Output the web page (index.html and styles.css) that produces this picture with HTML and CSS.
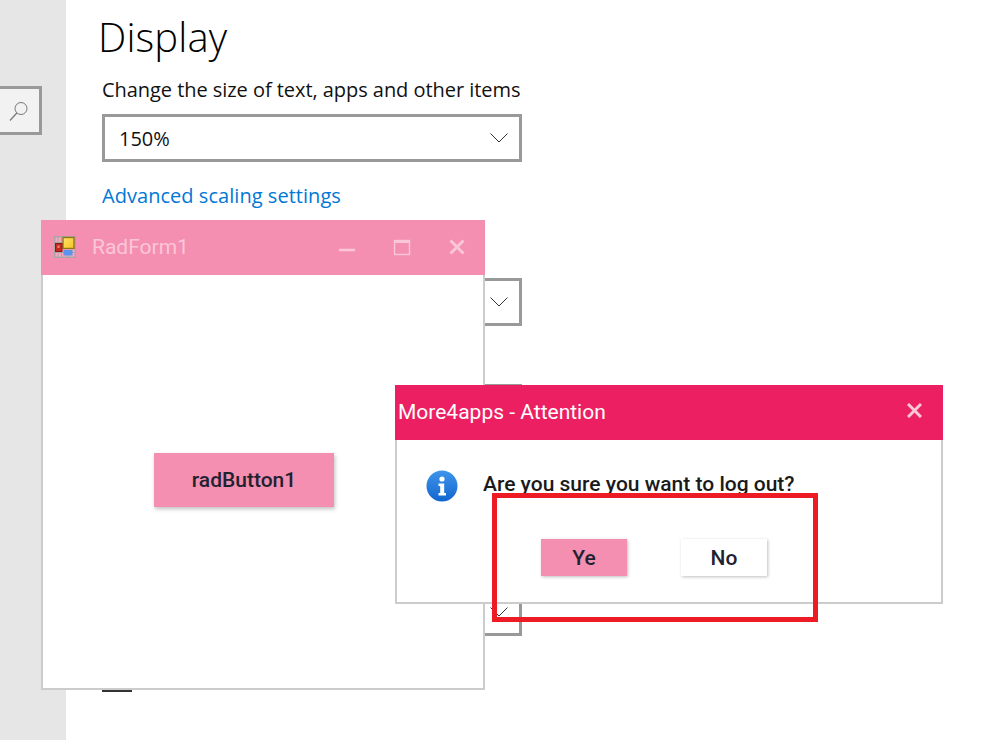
FILE: index.html
```html
<!DOCTYPE html>
<html>
<head>
<meta charset="utf-8"/>
<title>Display</title>
<link rel="stylesheet" href="styles.css">
</head>
<body>

<div class="settings">
  <div class="sidebar">
    <div class="search">
      <svg width="22" height="22" viewBox="0 0 22 22">
        <circle cx="13" cy="8.5" r="6" fill="none" stroke="#777" stroke-width="1"/>
        <path d="M8.8 13 L2 20.5" stroke="#777" stroke-width="1.2" fill="none"/>
      </svg>
    </div>
  </div>
  <div class="content">
    <h1>Display</h1>
    <div class="label">Change the size of text, apps and other items</div>
    <div class="select">
      <span>150%</span>
      <svg class="chevron" width="18" height="10" viewBox="0 0 18 10"><path d="M0.5 0.5 L9 9 L17.5 0.5" fill="none" stroke="#333" stroke-width="1"/></svg>
    </div>
    <a class="link" href="#">Advanced scaling settings</a>
    <div class="select select-2">
      <svg class="chevron" width="18" height="10" viewBox="0 0 18 10"><path d="M0.5 0.5 L9 9 L17.5 0.5" fill="none" stroke="#333" stroke-width="1"/></svg>
    </div>
    <div class="select select-3"></div>
    <div class="select select-4">
      <svg class="chevron" width="18" height="10" viewBox="0 0 18 10"><path d="M0.5 0.5 L9 9 L17.5 0.5" fill="none" stroke="#333" stroke-width="1"/></svg>
    </div>
    <div class="toggle"></div>
  </div>
</div>

<!-- RadForm1 window -->
<div class="window form-window">
  <div class="titlebar form-title">
    <svg class="app-icon" width="22" height="22" viewBox="0 0 22 22">
      <defs>
        <linearGradient id="iconGold" x1="0" y1="0" x2="1" y2="1">
          <stop offset="0" stop-color="#ffe26a"/>
          <stop offset="1" stop-color="#f5c21f"/>
        </linearGradient>
      </defs>
      <rect x="0.7" y="0.7" width="20.6" height="20.6" fill="#f4a9bf" stroke="#a9a5a5" stroke-width="1.4"/>
      <path d="M0 6.5 H8 M0 16.5 H22 M7.5 0 V22 M4 0 V6 M4 17 V22 M14.5 17 V22" stroke="#a9a5a5" fill="none"/>
      <rect x="9" y="1.5" width="11" height="11" fill="url(#iconGold)" stroke="#93761a" stroke-width="1.4"/>
      <rect x="1.5" y="7.5" width="6.5" height="8" fill="#c8281e" stroke="#8a1a14"/>
      <rect x="3.5" y="9.5" width="2" height="2.5" fill="#e88a7a"/>
      <rect x="9.5" y="14" width="9" height="5.5" fill="#5c93ee"/>
    </svg>
    <span class="form-name">RadForm1</span>
    <div class="controls">
      <svg width="18" height="18" viewBox="0 0 18 18"><path d="M1 12 H17" stroke="#fbc6d8" stroke-width="2.6"/></svg>
      <svg width="18" height="18" viewBox="0 0 18 18"><rect x="1.5" y="2.5" width="15" height="14" fill="none" stroke="#fbc6d8" stroke-width="1.4"/><path d="M1 3.5 H17" stroke="#fbc6d8" stroke-width="3"/></svg>
      <svg width="18" height="18" viewBox="0 0 18 18"><path d="M2.5 2.5 L15.5 15.5 M15.5 2.5 L2.5 15.5" stroke="#fbc6d8" stroke-width="3"/></svg>
    </div>
  </div>
  <div class="form-body">
    <div class="btn btn-large">radButton1</div>
  </div>
</div>

<!-- message box -->
<div class="window dialog-window">
  <div class="titlebar dialog-title">
    <span class="dialog-name">More4apps - Attention</span>
    <svg class="dialog-close" width="15" height="15" viewBox="0 0 15 15"><path d="M1 1 L14 14 M14 1 L1 14" stroke="#fbc6d8" stroke-width="3"/></svg>
  </div>
  <div class="dialog-body">
    <div class="dialog-msg">
      <svg class="info-icon" width="32" height="32" viewBox="0 0 32 32">
        <defs>
          <linearGradient id="infoBlue" x1="0" y1="0" x2="0" y2="1">
            <stop offset="0" stop-color="#3f95ea"/>
            <stop offset="1" stop-color="#1166cf"/>
          </linearGradient>
        </defs>
        <circle cx="16" cy="16" r="15.5" fill="url(#infoBlue)"/>
        <circle cx="16" cy="9" r="2.6" fill="#fff"/>
        <path d="M12.5 13.5 H18.2 V23 H20 V25.5 H12.5 V23 H14.2 V16 H12.5 Z" fill="#fff"/>
      </svg>
      <span class="msg-text">Are you sure you want to log out?</span>
    </div>
    <div class="dialog-buttons">
      <div class="btn btn-small btn-pink">Ye</div>
      <div class="btn btn-small btn-white">No</div>
    </div>
  </div>
</div>

<!-- red marker drawn on the screenshot -->
<div class="marker"></div>

</body>
</html>
```

FILE: styles.css
```css
html, body {
  margin: 0;
  padding: 0;
  height: 100%;
  background: #fff;
  overflow: hidden;
}

body {
  position: relative;
  font-family: 'Roboto', 'Liberation Sans', sans-serif;
  color: #1a1a1a;
}

.settings {
  display: flex;
  height: 740px;
}

.sidebar {
  width: 66px;
  flex-shrink: 0;
  background: #e6e6e6;
  padding-top: 86px;
  box-sizing: border-box;
}

.search {
  width: 42px;
  height: 49px;
  box-sizing: border-box;
  border: 3px solid #999;
  border-left: none;
  background: #f2f2f2;
  display: flex;
  align-items: center;
  justify-content: flex-end;
  padding-right: 9px;
}

.content {
  padding-left: 36px;
  font-family: 'Open Sans', 'Liberation Sans', sans-serif;
}

h1 {
  margin: 0 0 0 -4px;
  height: 73px;
  font-size: 40px;
  font-weight: 300;
  line-height: 74px;
  letter-spacing: 0.15px;
  color: #000;
}

.label {
  font-size: 20px;
  line-height: 34px;
  height: 41px;
  letter-spacing: -0.05px;
  color: #111;
}

.select {
  width: 420px;
  height: 48px;
  box-sizing: border-box;
  border: 3px solid #999;
  display: flex;
  align-items: center;
  justify-content: space-between;
  padding: 0 11px 0 14px;
  font-size: 20px;
  color: #111;
  background: #fff;
}

.select .chevron {
  margin-left: auto;
}

.link {
  display: block;
  margin-top: 18px;
  font-size: 20px;
  line-height: 32px;
  letter-spacing: 0.04px;
  color: #0078d7;
  text-decoration: none;
}

.select-2 {
  margin-top: 66px;
}

.select-3 {
  margin-top: 58px;
}

.select-4 {
  margin-top: 156px;
}

.toggle {
  width: 30px;
  height: 4px;
  margin-top: 52px;
  background: #333;
}

.window {
  position: absolute;
  box-sizing: border-box;
  background: #fff;
  display: flex;
  flex-direction: column;
}

.form-window {
  left: 41px;
  top: 220px;
  width: 444px;
  height: 470px;
}

.dialog-window {
  left: 395px;
  top: 385px;
  width: 548px;
  height: 219px;
}

.titlebar {
  height: 55px;
  box-sizing: border-box;
  padding-bottom: 2px;
  flex-shrink: 0;
  display: flex;
  align-items: center;
}

.form-title {
  background: #f48fb1;
  padding: 0 19px 2px 13px;
}

.app-icon {
  margin-right: 16px;
}

.form-name {
  font-size: 21px;
  color: #fbc6d8;
}

.controls {
  margin-left: auto;
  display: flex;
  gap: 37px;
}

.form-body {
  flex: 1;
  border: 2px solid #ccc;
  border-top: none;
  display: flex;
  align-items: flex-start;
  padding: 178px 0 0 111px;
}

.btn {
  display: flex;
  align-items: center;
  justify-content: center;
  font-weight: 500;
  color: #1f2230;
}

.btn-large {
  width: 180px;
  height: 54px;
  background: #f48fb1;
  font-size: 21px;
  box-shadow: 1px 2px 4px rgba(0, 0, 0, 0.25);
}

.dialog-title {
  background: #ec1f63;
  padding: 0 21px 2px 3px;
  justify-content: space-between;
}

.dialog-close {
  margin-bottom: 2px;
}

.dialog-name {
  font-size: 21px;
  color: #fff;
}

.dialog-body {
  flex: 1;
  border: 2px solid #ccc;
  border-top: none;
  position: relative;
}

.dialog-msg {
  display: flex;
  align-items: center;
  padding: 30px 0 0 29px;
  font-size: 21px;
  font-weight: 500;
  color: #1a1a1a;
}

.msg-text {
  margin-bottom: 4px;
}

.info-icon {
  margin-right: 25px;
}

.dialog-buttons {
  display: flex;
  gap: 54px;
  padding: 37px 0 0 144px;
}

.btn-small {
  width: 86px;
  height: 37px;
  font-size: 21px;
  box-shadow: 1px 1px 3px rgba(0, 0, 0, 0.25);
}

.btn-pink {
  background: #f48fb1;
}

.btn-white {
  background: #fff;
}

.marker {
  position: absolute;
  left: 492px;
  top: 493px;
  width: 326px;
  height: 129px;
  box-sizing: border-box;
  border: 5px solid #ed1c24;
}
```
